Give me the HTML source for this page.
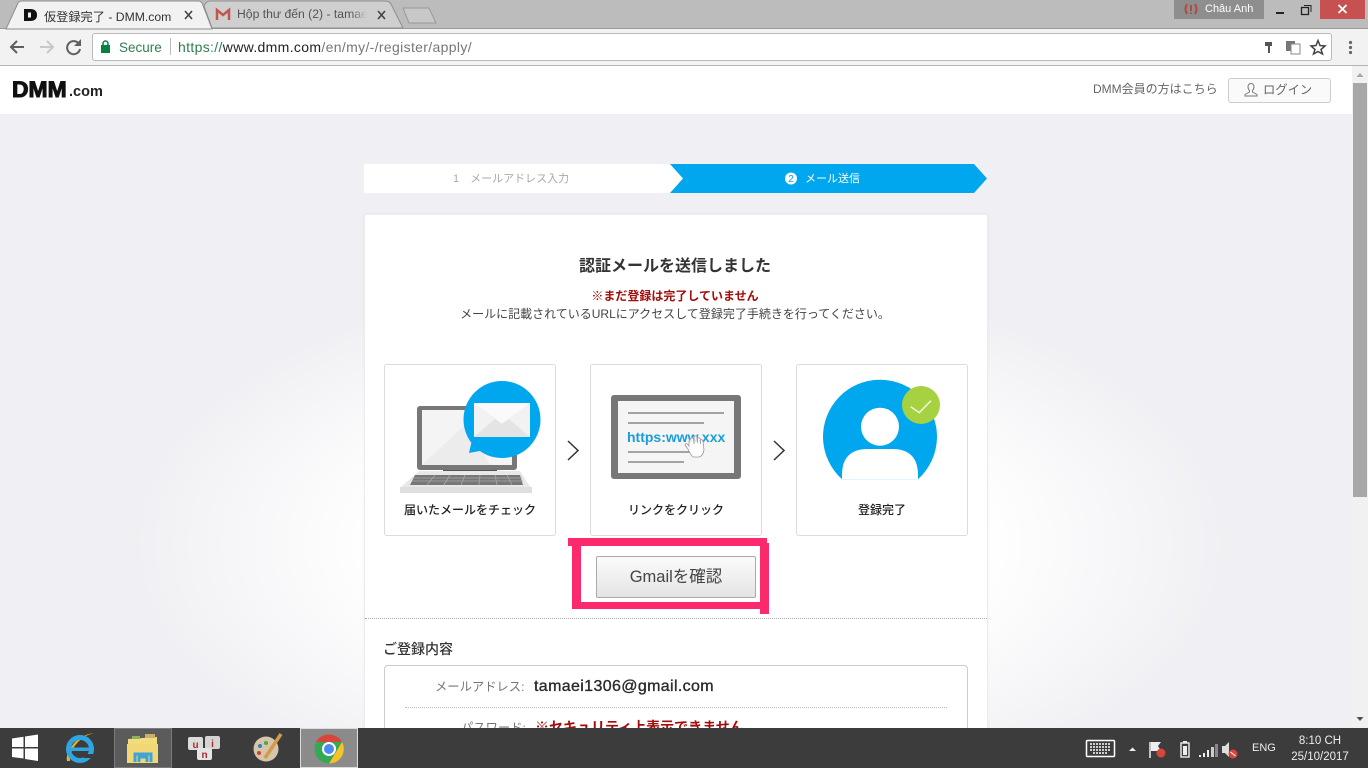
<!DOCTYPE html>
<html><head><meta charset="utf-8"><style>
*{box-sizing:border-box}
html,body{margin:0;padding:0;width:1368px;height:768px;overflow:hidden;background:#fff}
body{position:relative;font-family:"Liberation Sans","Noto Sans CJK JP",sans-serif;color:#333}
.a{position:absolute;white-space:nowrap}
.c{text-align:center}
.card{position:absolute;top:364px;width:172px;height:172px;background:#fff;border:1px solid #dcdcdc;border-radius:3px}
</style></head><body>

<!-- page -->
<div class="a" style="left:0;top:114px;width:1352px;height:614px;background:#f0f0f4"></div>
<div class="a" style="left:130px;top:240px;width:1100px;height:490px;background:radial-gradient(ellipse 50% 56% at 50% 62%,#fff 55%,rgba(255,255,255,0) 100%)"></div>
<div class="a" style="left:0;top:66px;width:1352px;height:48px;background:#fff"></div>

<!-- chrome -->
<div class="a" style="left:0;top:0;width:1368px;height:29px;background:#bcbcbc"></div>
<div class="a" style="left:0;top:28px;width:1368px;height:38px;background:#f2f2f2;border-bottom:1px solid #b5b5b5;border-top:1px solid #9a9a9a"></div>
<svg class="a" style="left:0;top:0" width="450" height="30">
<path d="M6 29L18 3Q19 1 22 1H198Q201 1 202 3L212 29Z" fill="#f2f2f2" stroke="#8f8f8f"/>
<path d="M212 28L204 6Q206 1 210 1H385Q389 1 391 4L403 28Z" fill="#cfcfcf" stroke="#8f8f8f"/>
<path d="M403 8H429L436 23H409Z" fill="#c8c8c8" stroke="#999"/>
<path d="M24 9H30Q37 9 37 15Q37 21 30 21H24Z" fill="#111"/><rect x="28" y="12.500" width="3" height="5" fill="#f2f2f2"/>
<path d="M217 20V10L223 15L229 10V20" fill="none" stroke="#c0574f" stroke-width="2.500"/>
<path d="M185 11L192 19M192 11L185 19M378 11L385 19M385 11L378 19" stroke="#444" stroke-width="1.600"/>
</svg>
<div class="a" style="left:44px;top:7px;font-size:12.200px;color:#333">仮登録完了 - DMM.com</div>
<div class="a" style="left:237px;top:7px;font-size:12.200px;color:#555;width:130px;overflow:hidden;-webkit-mask-image:linear-gradient(90deg,#000 88%,transparent)">Hộp thư đến (2) - tamae</div>

<!-- toolbar -->
<svg class="a" style="left:0;top:30px" width="100" height="34">
<path d="M24 17H12M17 11L11 17L17 23" fill="none" stroke="#5f5f5f" stroke-width="2"/>
<path d="M40 17H52M47 11L53 17L47 23" fill="none" stroke="#c8c8c8" stroke-width="2"/>
<path d="M79 14A6.500 6.500 0 1 0 80 19" fill="none" stroke="#5f5f5f" stroke-width="2"/><path d="M81 9V16H74Z" fill="#5f5f5f"/>
</svg>
<div class="a" style="left:92px;top:33px;width:1240px;height:28px;background:#fff;border:1px solid #b9b9b9;border-radius:3px"></div>
<svg class="a" style="left:100px;top:40px" width="12" height="14"><rect x="1" y="5" width="9" height="8" fill="#0b8043"/><path d="M3 5V3.500A2.500 2.500 0 0 1 8 3.500V5" fill="none" stroke="#0b8043" stroke-width="1.500"/></svg>
<div class="a" style="left:119px;top:40px;font-size:13.500px;color:#2f7d4f">Secure</div>
<div class="a" style="left:170px;top:38px;width:1px;height:17px;background:#bbb"></div>
<div class="a" style="left:178px;top:39px;font-size:14px;letter-spacing:.34px;color:#777"><span style="color:#2f7d4f">https://</span><span style="color:#222">www.dmm.com</span>/en/my/-/register/apply/</div>
<svg class="a" style="left:1260px;top:38px" width="70" height="18">
<path d="M5 4H12V8H10V15H8V8H5Z" fill="#555"/>
<rect x="26" y="3" width="9" height="10" fill="#777"/><rect x="31" y="6" width="9" height="10" fill="#fff" stroke="#888"/>
<path d="M58 2.500L60 7.500L65 8L61 11.500L62.500 16L58 13.500L53.500 16L55 11.500L51 8L56 7.500Z" fill="none" stroke="#444" stroke-width="1.500"/>
</svg>
<svg class="a" style="left:1346px;top:40px" width="10" height="16"><circle cx="4.500" cy="2.500" r="1.600" fill="#666"/><circle cx="4.500" cy="7.500" r="1.600" fill="#666"/><circle cx="4.500" cy="12.500" r="1.600" fill="#666"/></svg>

<!-- window controls -->
<div class="a" style="left:1174px;top:0;width:90px;height:19px;background:#8e8e8e"></div>
<div class="a" style="left:1205px;top:3px;font-size:11px;color:#fff">Châu Anh</div>
<svg class="a" style="left:1183px;top:2px" width="16" height="14"><path d="M4 2Q1 7 4 12M12 2Q15 7 12 12M8 3V9M8 10.500V12" fill="none" stroke="#b04a44" stroke-width="2"/></svg>
<svg class="a" style="left:1270px;top:2px" width="50" height="16"><rect x="6" y="10" width="8" height="2" fill="#222"/><rect x="31.500" y="5.500" width="7" height="7" fill="none" stroke="#222" stroke-width="1.300"/><path d="M34 3.500H41V10" fill="none" stroke="#222"/></svg>
<div class="a" style="left:1320px;top:0;width:45px;height:19px;background:#c75050"></div>
<svg class="a" style="left:1336px;top:3px" width="14" height="12"><path d="M2.500 2L10.500 10M10.500 2L2.500 10" stroke="#fff" stroke-width="1.800"/></svg>

<!-- DMM header -->
<div class="a" style="left:12px;top:80px;font-size:22px;line-height:20px;font-weight:bold;color:#111;letter-spacing:0;-webkit-text-stroke:1px #111;transform:scaleX(1.04);transform-origin:left">DMM</div>
<div class="a" style="left:69px;top:84px;font-size:14.500px;font-weight:bold;color:#222">.com</div>
<div class="a" style="left:1093px;top:80px;font-size:12px;color:#666">DMM会員の方はこちら</div>
<div class="a" style="left:1228px;top:78px;width:103px;height:25px;border:1px solid #ccc;border-radius:3px;background:#fafafa"></div>
<svg class="a" style="left:1244px;top:82px" width="14" height="15"><path d="M7 1.500A3 3 0 0 1 10 4.500Q10 7 8.500 8.500V10L13 12.500V14H1V12.500L5.500 10V8.500Q4 7 4 4.500A3 3 0 0 1 7 1.500Z" fill="none" stroke="#777"/></svg>
<div class="a" style="left:1263px;top:80px;font-size:12.300px;color:#666">ログイン</div>

<!-- scrollbar -->
<div class="a" style="left:1352px;top:66px;width:16px;height:662px;background:#f1f1f1"></div>
<div class="a" style="left:1353px;top:83px;width:14px;height:414px;background:#a8a8a8"></div>
<svg class="a" style="left:1352px;top:70px" width="16" height="10"><path d="M4.500 7L8 3L11.500 7Z" fill="#a8a8a8"/></svg>
<svg class="a" style="left:1352px;top:714px" width="16" height="10"><path d="M4.500 3L8 7L11.500 3Z" fill="#505050"/></svg>

<!-- steps -->
<svg class="a" style="left:364px;top:164px" width="626" height="29">
<rect width="320" height="29" fill="#fff"/>
<path d="M306 0H610L623 14.500L610 29H306L319 14.500Z" fill="#00a7ee"/>
<circle cx="427" cy="14.500" r="6" fill="#fff"/>
<text x="427" y="18" font-family="Liberation Sans" font-size="10" fill="#00a7ee" text-anchor="middle">2</text>
</svg>
<div class="a" style="left:453px;top:170px;font-size:11px;color:#aaa"><span style="margin-right:11px">1</span>メールアドレス入力</div>
<div class="a" style="left:805px;top:170px;font-size:11px;color:#fff">メール送信</div>

<!-- main card -->
<div class="a" style="left:364px;top:214px;width:624px;height:520px;background:#fff;border:1px solid #ececec;border-radius:3px;box-shadow:0 0 3px rgba(0,0,0,.04)"></div>
<div class="a c" style="left:364px;top:257px;width:622px;font-size:16px;line-height:20px;font-weight:bold;color:#333">認証メールを送信しました</div>
<div class="a c" style="left:364px;top:288px;width:622px;font-size:12px;line-height:17px;font-weight:bold;color:#a30c0c">※まだ登録は完了していません</div>
<div class="a c" style="left:364px;top:306px;width:622px;font-size:12px;line-height:17px;color:#444">メールに記載されているURLにアクセスして登録完了手続きを行ってください。</div>

<div class="card" style="left:384px"></div>
<div class="card" style="left:590px"></div>
<div class="card" style="left:796px"></div>

<!-- laptop -->
<svg class="a" style="left:395px;top:378px" width="150" height="118">
<rect x="22" y="28" width="100" height="64" rx="3" fill="#777"/>
<rect x="27" y="32" width="90" height="55" fill="#f4f4f4"/>
<path d="M27 87L72 45L95 87Z" fill="#ececec"/>
<rect x="48" y="92" width="54" height="2" fill="#555"/>
<path d="M24 93H125L136 110H5Z" fill="#e8e8e8"/>
<path d="M20 97H125L128 107H15Z" fill="#777"/>
<path d="M18 100H127M17 103H128M40 97L32 107M55 97L49 107M70 97L66 107M85 97L84 107M100 97L102 107M112 97L117 107" stroke="#aaa" stroke-width=".8"/>
<rect x="5" y="109" width="132" height="6" fill="#dedede"/>
<circle cx="107" cy="41.500" r="38.500" fill="#00a7ee"/>
<path d="M77 62L74 75L90 72Z" fill="#00a7ee"/>
<rect x="79" y="25" width="56" height="34" fill="#f2f2f2"/>
<path d="M79 25L107 45L135 25Z" fill="#fafafa"/>
<path d="M79 59L100 41L107 46L114 41L135 59Z" fill="#e4e4e4"/>
</svg>
<div class="a c" style="left:384px;top:502px;width:172px;font-size:12px;line-height:17px;color:#222;font-weight:500">届いたメールをチェック</div>
<svg class="a" style="left:565px;top:440px" width="16" height="21"><path d="M3 1L13 10.500L3 20" fill="none" stroke="#333" stroke-width="1.500"/></svg>

<!-- link -->
<svg class="a" style="left:605px;top:390px" width="142" height="94">
<rect x="6" y="5" width="130" height="84" rx="3" fill="#777"/>
<rect x="13" y="11" width="116" height="72" fill="#f5f5f5"/>
<path d="M23 23H119M23 33H99M23 62H85M23 72H79" stroke="#888" stroke-width="1.500"/>
<text x="22" y="52" font-family="Liberation Sans" font-size="14" font-weight="bold" fill="#1a9ed9">https:www.xxx</text>
<path transform="translate(-2 1)" d="M86 50L88 47Q90 46 90.500 48L91 53V46Q92 44 94 45.500L94.500 52V47Q96 46 97.500 48V53V49Q99 48 100 50L101 59Q100 65 96 66H90Q87 63 85 58L82 54Q83 51 86 55Z" fill="#fff" fill-opacity=".8" stroke="#999" stroke-width=".8"/>
</svg>
<div class="a c" style="left:590px;top:502px;width:172px;font-size:12px;line-height:17px;color:#222;font-weight:500">リンクをクリック</div>
<svg class="a" style="left:771px;top:440px" width="16" height="21"><path d="M3 1L13 10.500L3 20" fill="none" stroke="#333" stroke-width="1.500"/></svg>

<!-- user -->
<svg class="a" style="left:815px;top:375px" width="130" height="110">
<path d="M27.100 104.300A57 57 0 1 1 102.900 104.300Z" fill="#00a7ee"/>
<circle cx="65" cy="51.700" r="19" fill="#fff"/>
<path d="M27 104.300V100Q27 74 53 74H77Q103 74 103 100V104.300Z" fill="#fff"/>
<circle cx="106" cy="30" r="19" fill="#a6d140"/>
<path d="M95.700 31.700L104.300 37.700L116 25.700" fill="none" stroke="#f1f7dc" stroke-width="1.500"/>
</svg>
<div class="a c" style="left:796px;top:502px;width:172px;font-size:12px;line-height:17px;color:#222;font-weight:500">登録完了</div>

<!-- button + annotation -->
<div class="a c" style="left:596px;top:556px;width:160px;height:42px;border:1px solid #aaa;border-radius:2px;background:linear-gradient(#fbfbfb,#e4e4e4);font-size:16.500px;line-height:40px;color:#444">Gmailを確認</div>
<svg class="a" style="left:565px;top:535px" width="210" height="84">
<path d="M3 3H202V11H3Z M7 11H16V74H7Z M7 67H195V74H7Z M195 8H204V79H195Z" fill="#fb2a6d"/>
</svg>

<div class="a" style="left:365px;top:618px;width:622px;border-top:1px dotted #aaa"></div>
<div class="a" style="left:383px;top:640px;font-size:14px;line-height:18px;font-weight:500;color:#333">ご登録内容</div>
<div class="a" style="left:384px;top:665px;width:584px;height:80px;border:1px solid #ccc;border-radius:4px;background:#fff"></div>
<div class="a" style="left:435px;top:679px;font-size:12.300px;line-height:16px;color:#777">メールアドレス:</div>
<div class="a" style="left:534px;top:678px;font-size:16px;line-height:18px;letter-spacing:.36px;color:#2a2a2a;-webkit-text-stroke:.35px #2a2a2a">tamaei1306@gmail.com</div>
<div class="a" style="left:405px;top:707px;width:542px;border-top:1px dotted #bbb"></div>
<div class="a" style="left:461px;top:720px;font-size:12.300px;line-height:16px;color:#777">パスワード:</div>
<div class="a" style="left:535px;top:718px;font-size:14px;line-height:18px;color:#a30c0c;font-weight:bold">※セキュリティ上表示できません</div>

<!-- taskbar -->
<div class="a" style="left:0;top:728px;width:1368px;height:40px;background:#3c3c3c"></div>
<svg class="a" style="left:0;top:728px" width="370" height="40">
<path d="M12 10.500L23.500 8.800V19H12ZM25 8.500L38 6.500V19H25ZM12 20.500H23.500V30.500L12 29ZM25 20.500H38V33L25 31Z" fill="#fff"/>
<rect x="114.500" y="0.500" width="57" height="39" fill="#5b5b5b" stroke="#7b7b7b"/>
<rect x="300.500" y="0.500" width="57" height="39" fill="#8b8b8b" stroke="#dcdcdc"/>
<path d="M67 33Q65 26 75 14Q88 4 94 6Q88 5 78 14Q69 24 70 33Z" fill="#e6b422"/>
<circle cx="80" cy="21" r="11.500" fill="none" stroke="#2fa6e0" stroke-width="5"/><rect x="71" y="19.500" width="19" height="3.500" fill="#2fa6e0"/><path d="M84 26L94 26L94 30L84 30Z" fill="#3c3c3c"/>
<path d="M128 11L157 9V20H128Z" fill="#f3dc7c"/><path d="M132 8H140V11H132Z" fill="#8cb35a"/><path d="M145 6H155V10H145Z" fill="#c9b16c"/><path d="M127 16H158V35H127Z" fill="#f2d777"/>
<path d="M135 34V26H151V34M139 34V29H147V34" fill="none" stroke="#3fa3d8" stroke-width="3"/>
<rect x="188" y="9" width="15" height="13" rx="2" fill="#dcdcdc"/><rect x="205" y="8" width="15" height="13" rx="2" fill="#d4d4d4"/><rect x="197" y="20" width="15" height="12" rx="2" fill="#e4e4e4"/>
<text x="195.500" y="20" font-family="Liberation Sans" font-size="10" font-weight="bold" fill="#b3262a" text-anchor="middle">u</text>
<text x="212.500" y="19" font-family="Liberation Sans" font-size="10" font-weight="bold" fill="#b3262a" text-anchor="middle">i</text>
<text x="204.500" y="30" font-family="Liberation Sans" font-size="10" font-weight="bold" fill="#b3262a" text-anchor="middle">n</text>
<circle cx="266" cy="21" r="12.500" fill="#d6c5a8"/><circle cx="260" cy="18" r="2" fill="#3a7bc0"/><circle cx="266" cy="15" r="2" fill="#48a84a"/><circle cx="259" cy="25" r="2" fill="#c9423c"/><path d="M265 30L281 6" stroke="#d39a4c" stroke-width="3.500"/>
<circle cx="329" cy="21" r="14.500" fill="#34a853"/>
<path d="M329 6.500A14.500 14.500 0 0 1 342 14H317L316 14A14.500 14.500 0 0 1 329 6.500Z" fill="#d9453a"/>
<path d="M342 14A14.500 14.500 0 0 1 329 35.500L336 24Z" fill="#f6c229"/>
<circle cx="329" cy="21" r="7" fill="#fff"/><circle cx="329" cy="21" r="5" fill="#4a8af4"/>
</svg>
<svg class="a" style="left:1080px;top:728px" width="170" height="40">
<rect x="6.500" y="12.500" width="28" height="16" rx="1" fill="#3c3c3c" stroke="#fff" stroke-width="1.500"/>
<path d="M10 16H31M10 19H31M10 22H31M13 25H28" stroke="#fff" stroke-width="1.600" stroke-dasharray="2 1"/>
<path d="M49 23L52.500 19.500L56 23Z" fill="#eee"/>
<path d="M70 14V30" stroke="#eee" stroke-width="1.500"/><path d="M71 14H81L78 18L81 23H71Z" fill="#eee"/><circle cx="81" cy="25" r="4.500" fill="#d9453a"/>
<rect x="101" y="15" width="8" height="14" fill="none" stroke="#eee" stroke-width="1.400"/><rect x="103" y="13" width="4" height="2" fill="#eee"/><rect x="103" y="18" width="4" height="9" fill="#eee"/>
<path d="M119 27H121V29H119ZM123 25H125V29H123ZM127 22H129V29H127Z" fill="#eee"/><path d="M131 19H134V29H131Z" fill="#ccc"/><path d="M135 16H138V29H135Z" fill="#888"/>
<path d="M142 18H145L149 14V29L145 25H142Z" fill="#ddd"/><circle cx="153" cy="26" r="4.500" fill="#d9453a"/><path d="M150.500 24L155.500 28" stroke="#fff"/>
</svg>
<div class="a" style="left:1252px;top:742px;font-size:11px;color:#eee">ENG</div>
<div class="a c" style="left:1285px;top:733px;width:70px;font-size:11.500px;line-height:16px;color:#eee">8:10 CH<br>25/10/2017</div>
</body></html>
